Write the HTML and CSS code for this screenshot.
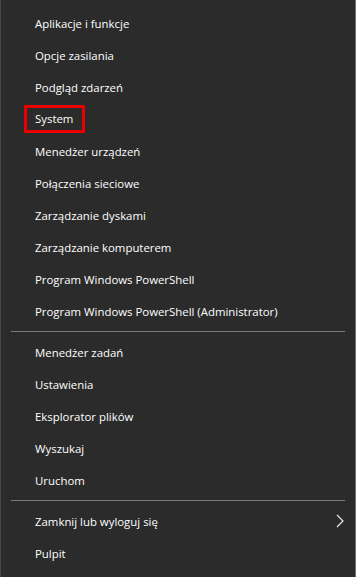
FILE: index.html
```html
<!DOCTYPE html>
<html lang="pl">
<head>
    <meta charset="UTF-8">
    <meta name="viewport" content="width=device-width, initial-scale=1.0">
    <title>Menu Win+X</title>
    <link rel="stylesheet" href="styles.css">
</head>
<body>
<nav class="menu">
    <ul class="group">
        <li class="item"><span class="label">Aplikacje i funkcje</span></li>
        <li class="item"><span class="label">Opcje zasilania</span></li>
        <li class="item"><span class="label">Podgląd zdarzeń</span></li>
        <li class="item"><span class="label highlight">System</span></li>
        <li class="item"><span class="label">Menedżer urządzeń</span></li>
        <li class="item"><span class="label">Połączenia sieciowe</span></li>
        <li class="item"><span class="label">Zarządzanie dyskami</span></li>
        <li class="item"><span class="label">Zarządzanie komputerem</span></li>
        <li class="item"><span class="label">Program Windows PowerShell</span></li>
        <li class="item"><span class="label">Program Windows PowerShell (Administrator)</span></li>
    </ul>
    <hr class="divider">
    <ul class="group">
        <li class="item"><span class="label">Menedżer zadań</span></li>
        <li class="item"><span class="label">Ustawienia</span></li>
        <li class="item"><span class="label">Eksplorator plików</span></li>
        <li class="item"><span class="label">Wyszukaj</span></li>
        <li class="item"><span class="label">Uruchom</span></li>
    </ul>
    <hr class="divider">
    <ul class="group">
        <li class="item">
            <span class="label">Zamknij lub wyloguj się</span>
            <svg class="chevron" width="8" height="14" viewBox="0 0 8 14">
                <path d="M1 1 L7 7 L1 13" fill="none" stroke="#e8e8e8" stroke-width="1.2"/>
            </svg>
        </li>
        <li class="item"><span class="label">Pulpit</span></li>
    </ul>
</nav>
</body>
</html>
```

FILE: styles.css
```css
*, *::before, *::after{
    box-sizing: border-box;
    padding: 0;
    margin: 0;
}

body{
    background-color: #2b2b2b;
    font-family: "Segoe UI", "Open Sans", "Noto Sans", sans-serif;
    font-size: 11.4px;
    color: #fff;
}

.menu{
    width: 356px;
    height: 577px;
    padding-top: 7px;
    border-left: 1px solid #464646;
    border-right: 1px solid #6e6e6e;
}

.group{
    list-style: none;
}

.item{
    display: flex;
    align-items: center;
    justify-content: space-between;
    height: 32px;
    padding-left: 34px;
    padding-right: 11px;
}

.label{
    white-space: nowrap;
}

.highlight{
    margin-left: -11px;
    padding: 3px 9px 4px 8px;
    border: 3px solid #ea0000;
}

.divider{
    border: none;
    height: 1px;
    background-color: #7a7a7a;
    margin: 4px 10px 4px 10px;
}

.chevron{
    display: block;
}
```
